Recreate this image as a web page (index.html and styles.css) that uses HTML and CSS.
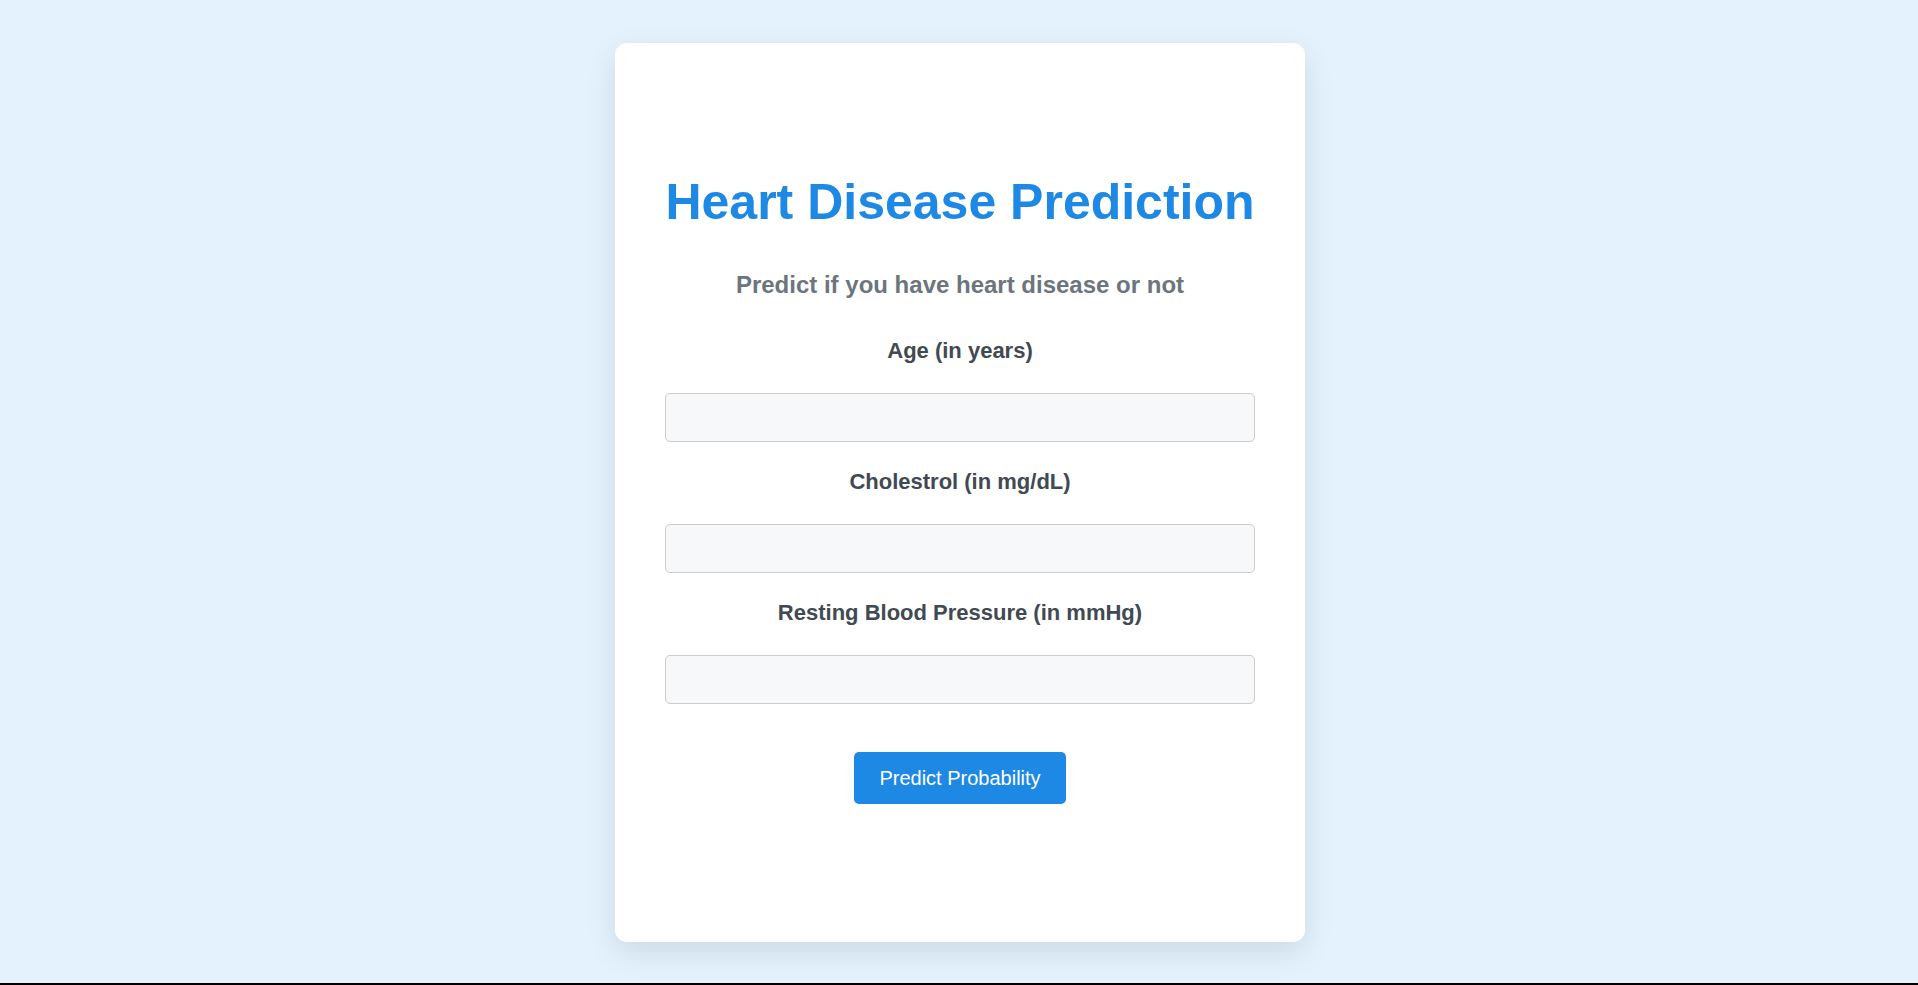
FILE: index.html
```html
<!DOCTYPE html>
<html lang="en">
<head>
<meta charset="utf-8">
<title>Heart Disease Prediction</title>
<link rel="stylesheet" href="styles.css">
</head>
<body>
<div class="page">
  <div class="card">
    <h1 class="title">Heart Disease Prediction</h1>
    <h2 class="subtitle">Predict if you have heart disease or not</h2>
    <form class="form">
      <label class="label" for="age">Age (in years)</label>
      <input class="input" id="age" type="text">
      <label class="label" for="chol">Cholestrol (in mg/dL)</label>
      <input class="input" id="chol" type="text">
      <label class="label" for="bp">Resting Blood Pressure (in mmHg)</label>
      <input class="input" id="bp" type="text">
      <button class="button" type="button">Predict Probability</button>
    </form>
  </div>
</div>
</body>
</html>
```
FILE: styles.css
```css
html, body {
  margin: 0;
  padding: 0;
}
body {
  background: #e3f2fd;
  font-family: "Liberation Sans", Arial, sans-serif;
}
.page {
  height: 985px;
  box-sizing: border-box;
  padding: 43px 0 0 2px;
  border-bottom: 2px solid #000;
}
.card {
  width: 690px;
  height: 899px;
  box-sizing: border-box;
  margin: 0 auto;
  padding: 130px 50px 0;
  background: #fff;
  border-radius: 12px;
  box-shadow: 0 10px 30px rgba(0, 0, 0, 0.1);
  text-align: center;
}
.title {
  margin: 0;
  font-size: 50px;
  line-height: 58px;
  font-weight: bold;
  color: #1e88e5;
}
.subtitle {
  margin: 40px 0 0;
  font-size: 24px;
  line-height: 28px;
  font-weight: bold;
  color: #6c757d;
}
.form {
  display: flex;
  flex-direction: column;
  align-items: center;
  margin-top: 39px;
}
.label {
  font-size: 22px;
  line-height: 25px;
  font-weight: bold;
  color: #414953;
  margin-bottom: 30px;
}
.input {
  width: 100%;
  height: 49px;
  box-sizing: border-box;
  border: 1px solid #ccc;
  border-radius: 5px;
  background: #f7f8fa;
  margin: 0 0 27px;
  font-family: inherit;
  font-size: 18px;
  padding: 0 12px;
}
.button {
  margin-top: 21px;
  height: 52px;
  padding: 0 25px;
  border: none;
  border-radius: 5px;
  background: #1e88e5;
  color: #fff;
  font-family: inherit;
  font-size: 20px;
  cursor: pointer;
}
```
